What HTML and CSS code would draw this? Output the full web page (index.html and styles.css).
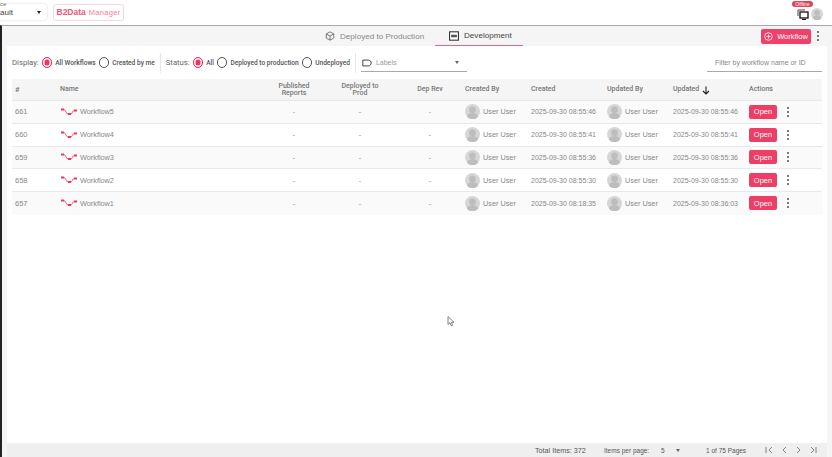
FILE: index.html
```html
<!DOCTYPE html>
<html lang="en">
  <head>
    <meta charset="UTF-8" />
    <title>B2Data Manager - Workflows</title>
    <link rel="stylesheet" href="styles.css">
  </head>
  <body>
    <svg class="defs">
      <defs>
        <symbol id="flow" viewBox="0 0 18 8">
          <path d="M1 1.500h3M8 6h3M14 2.500h3" stroke="#f0365f" stroke-width="2.200" fill="none"/>
          <path d="M4 1.500C6 2 6 6 8 6M11 6C12.500 6 12.500 2.500 14 2.500" stroke="#f0365f" stroke-width=".8" fill="none"/>
        </symbol>
        <symbol id="user" viewBox="0 0 16 16">
          <circle cx="8" cy="8" r="8" fill="#d6d6d6"/>
          <circle cx="8" cy="6.200" r="3.600" fill="#bdbdbd"/>
          <path d="M2 13.500c1-3 3.500-3.800 6-3.800s5 .8 6 3.800a8 8 0 0 1-12 0z" fill="#bdbdbd"/>
        </symbol>
        <symbol id="kebab" viewBox="0 0 4 12">
          <circle cx="2" cy="2" r=".95" fill="#444"/>
          <circle cx="2" cy="6" r=".95" fill="#444"/>
          <circle cx="2" cy="10" r=".95" fill="#444"/>
        </symbol>
      </defs>
    </svg>

    <header class="topbar">
      <div class="space-select">
        <span class="space-label">ce</span>
        <span class="space-value">ault</span>
        <span class="caret dark"></span>
      </div>
      <div class="brand"><b>B2Data</b><span>Manager</span></div>
      <div class="top-right">
        <span class="offline">Offline</span>
        <svg class="screens" viewBox="0 0 12 11">
          <path d="M1 7V1h7" fill="none" stroke="#444" stroke-width="1"/>
          <rect x="3" y="3" width="8" height="6" fill="#fff" stroke="#111" stroke-width="1.300"/>
          <path d="M5 10.500h4" stroke="#111" stroke-width="1"/>
        </svg>
        <svg class="top-avatar"><use href="#user"/></svg>
      </div>
    </header>

    <main class="main">
      <nav class="tabs">
        <a class="tab">
          <svg class="tab-icon" viewBox="0 0 12 12">
            <path d="M6 1l4.500 2.500v5L6 11 1.500 8.500v-5zM1.500 3.500L6 6l4.500-2.500M6 6v5" fill="none" stroke="#555" stroke-width=".9"/>
          </svg>
          Deployed to Production
        </a>
        <a class="tab active">
          <svg class="tab-icon" viewBox="0 0 12 12">
            <rect x=".7" y="1" width="10.600" height="10" fill="#fff" stroke="#222" stroke-width="1.200"/>
            <path d="M2.500 4.500h7v3h-7z" fill="#555"/>
          </svg>
          Development
        </a>
        <div class="tab-actions">
          <button class="add-btn">
            <svg class="plus" viewBox="0 0 10 10">
              <circle cx="5" cy="5" r="4.200" fill="none" stroke="#fff" stroke-width=".9"/>
              <path d="M5 2.800v4.400M2.800 5h4.400" stroke="#fff" stroke-width=".9"/>
            </svg>
            Workflow
          </button>
          <svg class="kebab"><use href="#kebab"/></svg>
        </div>
      </nav>

      <section class="card">
        <div class="filters">
          <span class="filter-title">Display:</span>
          <span class="radio on"></span><span class="radio-text">All Workflows</span>
          <span class="radio"></span><span class="radio-text">Created by me</span>
          <span class="divider"></span>
          <span class="filter-title">Status:</span>
          <span class="radio on"></span><span class="radio-text">All</span>
          <span class="radio"></span><span class="radio-text">Deployed to production</span>
          <span class="radio"></span><span class="radio-text">Undeployed</span>
          <span class="divider"></span>
          <div class="labels">
            <svg class="label-icon" viewBox="0 0 12 9">
              <path d="M1 1h6.500C9.500 1 11 2.500 11 4.500S9.500 8 7.500 8H1z" fill="none" stroke="#222" stroke-width="1"/>
            </svg>
            <span>Labels</span>
            <span class="caret"></span>
          </div>
          <div class="search">Filter by workflow name or ID</div>
        </div>

        <div class="table">
          <div class="row head">
            <div>#</div>
            <div class="name-head">Name</div>
            <div class="center">Published Reports</div>
            <div class="center">Deployed to Prod</div>
            <div class="center">Dep Rev</div>
            <div>Created By</div>
            <div>Created</div>
            <div>Updated By</div>
            <div class="sorted">Updated
              <svg class="arrow" viewBox="0 0 8 9">
                <path d="M4 .5v7M1 5l3 3 3-3" fill="none" stroke="#222" stroke-width="1.100"/>
              </svg>
            </div>
            <div>Actions</div>
          </div>

          <div class="row">
            <div>661</div>
            <div class="wf"><svg class="flow"><use href="#flow"/></svg>Workflow5</div>
            <div class="center">-</div><div class="center">-</div><div class="center">-</div>
            <div class="who"><svg class="avatar"><use href="#user"/></svg>User User</div>
            <div>2025-09-30 08:55:46</div>
            <div class="who"><svg class="avatar"><use href="#user"/></svg>User User</div>
            <div>2025-09-30 08:55:46</div>
            <div class="acts"><button class="open">Open</button><svg class="kebab"><use href="#kebab"/></svg></div>
          </div>
          <div class="row">
            <div>660</div>
            <div class="wf"><svg class="flow"><use href="#flow"/></svg>Workflow4</div>
            <div class="center">-</div><div class="center">-</div><div class="center">-</div>
            <div class="who"><svg class="avatar"><use href="#user"/></svg>User User</div>
            <div>2025-09-30 08:55:41</div>
            <div class="who"><svg class="avatar"><use href="#user"/></svg>User User</div>
            <div>2025-09-30 08:55:41</div>
            <div class="acts"><button class="open">Open</button><svg class="kebab"><use href="#kebab"/></svg></div>
          </div>
          <div class="row">
            <div>659</div>
            <div class="wf"><svg class="flow"><use href="#flow"/></svg>Workflow3</div>
            <div class="center">-</div><div class="center">-</div><div class="center">-</div>
            <div class="who"><svg class="avatar"><use href="#user"/></svg>User User</div>
            <div>2025-09-30 08:55:36</div>
            <div class="who"><svg class="avatar"><use href="#user"/></svg>User User</div>
            <div>2025-09-30 08:55:36</div>
            <div class="acts"><button class="open">Open</button><svg class="kebab"><use href="#kebab"/></svg></div>
          </div>
          <div class="row">
            <div>658</div>
            <div class="wf"><svg class="flow"><use href="#flow"/></svg>Workflow2</div>
            <div class="center">-</div><div class="center">-</div><div class="center">-</div>
            <div class="who"><svg class="avatar"><use href="#user"/></svg>User User</div>
            <div>2025-09-30 08:55:30</div>
            <div class="who"><svg class="avatar"><use href="#user"/></svg>User User</div>
            <div>2025-09-30 08:55:30</div>
            <div class="acts"><button class="open">Open</button><svg class="kebab"><use href="#kebab"/></svg></div>
          </div>
          <div class="row">
            <div>657</div>
            <div class="wf"><svg class="flow"><use href="#flow"/></svg>Workflow1</div>
            <div class="center">-</div><div class="center">-</div><div class="center">-</div>
            <div class="who"><svg class="avatar"><use href="#user"/></svg>User User</div>
            <div>2025-09-30 08:18:35</div>
            <div class="who"><svg class="avatar"><use href="#user"/></svg>User User</div>
            <div>2025-09-30 08:36:03</div>
            <div class="acts"><button class="open">Open</button><svg class="kebab"><use href="#kebab"/></svg></div>
          </div>
        </div>
      </section>

      <footer class="pager">
        <span class="total">Total Items: 372</span>
        <span class="per-page">Items per page:</span>
        <span class="per-value">5</span>
        <span class="caret"></span>
        <span class="pages">1 of 75 Pages</span>
        <svg class="pager-icons" viewBox="0 0 52 8">
          <path d="M1 1v6M7 1L4 4l3 3M21 1l-3 3 3 3M32 1l3 3-3 3M46 1l3 3-3 3M51 1v6" fill="none" stroke="#666" stroke-width=".8"/>
        </svg>
      </footer>
    </main>

    <svg class="cursor" viewBox="0 0 8 11">
      <path d="M1 .5v8l2-1.700 1.300 3 1.300-.6-1.300-2.900h2.700z" fill="#fff" stroke="#666" stroke-width=".8"/>
    </svg>
  </body>
</html>
```

FILE: styles.css
```css
* {
    box-sizing: border-box;
}

html,
body {
    margin: 0;
    height: 457px;
    overflow: hidden;
}

body {
    font-family: "Liberation Sans", Arial, sans-serif;
    font-size: 8px;
    color: #777;
    background: #f5f5f5;
    display: flex;
    flex-direction: column;
}

.defs {
    width: 0;
    height: 0;
    position: absolute;
}

.topbar {
    height: 26px;
    flex: none;
    background: #fff;
    border-bottom: 1px solid #a8a8a8;
    display: flex;
    align-items: center;
    padding-bottom: 1px;
}

.space-select {
    position: relative;
    width: 47px;
    height: 16px;
    display: flex;
    align-items: center;
    border-radius: 0 3px 3px 0;
    box-shadow: 0 0 2px rgba(0,0,0,0.2);
}

.space-label {
    position: absolute;
    top: -3px;
    left: 0;
    font-size: 6px;
    color: #777;
}

.space-value {
    font-size: 8px;
    color: #444;
    margin-top: 1px;
}

.caret {
    width: 0;
    height: 0;
    border-left: 2.5px solid transparent;
    border-right: 2.5px solid transparent;
    border-top: 3px solid #666;
}

.caret.dark {
    border-top-color: #222;
    position: absolute;
    right: 6px;
    top: 7px;
}

.brand {
    margin-left: 6px;
    width: 71px;
    height: 17px;
    border: 1px solid #fbd3dc;
    border-radius: 3px;
    display: flex;
    align-items: center;
    justify-content: center;
    gap: 3px;
    color: #f27d9a;
}

.brand b {
    font-size: 8.5px;
    color: #e8587c;
}

.brand span {
    font-size: 7.5px;
    letter-spacing: 0.3px;
}

.top-right {
    margin-left: auto;
    margin-right: 9px;
    width: 32px;
    height: 25px;
    position: relative;
    display: flex;
    align-items: flex-end;
    justify-content: flex-end;
    padding-bottom: 5px;
}

.offline {
    position: absolute;
    top: 1px;
    left: 1px;
    width: 21px;
    height: 6px;
    line-height: 6px;
    text-align: center;
    font-size: 5px;
    color: #fff;
    background: #e04258;
    border-radius: 3px;
}

.screens {
    width: 12px;
    height: 11px;
    margin-right: 2px;
}

.top-avatar {
    width: 12px;
    height: 12px;
}

.main {
    flex: 1;
    min-height: 0;
    margin-top: -1px;
    border-top: 1px solid #a8a8a8;
    border-left: 2px solid #222;
    display: flex;
    flex-direction: column;
}

.tabs {
    height: 20px;
    flex: none;
    display: flex;
    padding-left: 306px;
    align-items: stretch;
}

.tab {
    width: 127px;
    padding-left: 17px;
    display: flex;
    align-items: center;
    gap: 5px;
    font-size: 8.1px;
    color: #888;
}

.tab.active {
    width: 88px;
    padding-left: 14px;
    color: #444;
    border-bottom: 1px solid #ee6482;
}

.tab-icon {
    width: 10px;
    height: 10px;
    flex: none;
}

.tab-actions {
    margin-left: auto;
    display: flex;
    align-items: center;
    gap: 5px;
    padding-right: 12px;
}

.add-btn {
    width: 50px;
    height: 15px;
    border: none;
    border-radius: 2px;
    background: #f0416a;
    color: #fff;
    font: inherit;
    font-size: 7.5px;
    display: flex;
    align-items: center;
    justify-content: center;
    gap: 4px;
    padding: 0;
}

.plus {
    width: 9px;
    height: 9px;
}

.kebab {
    width: 4px;
    height: 12px;
    flex: none;
}

.card {
    flex: 1;
    min-height: 0;
    margin: 0 5px;
    padding: 0 5px;
    background: #fff;
}

.filters {
    height: 33px;
    display: flex;
    align-items: center;
    color: #555;
}

.filter-title {
    font-family: Roboto, sans-serif;
    font-size: 7.7px;
    color: #666;
    margin-right: 3px;
}

.radio {
    width: 10.5px;
    height: 10.5px;
    flex: none;
    border: 1px solid #555;
    border-radius: 50%;
    margin-right: 3px;
}

.radio.on {
    border-color: #f0365f;
    background: #f0365f;
    box-shadow: inset 0 0 0 1.5px #fff;
}

.radio-text {
    font-family: Roboto, sans-serif;
    font-size: 6.6px;
    font-weight: 500;
    color: #555;
    margin-right: 3px;
}

.divider {
    width: 1px;
    height: 20px;
    background: #e6e6e6;
    margin: 0 5px 0 2px;
}

.labels {
    width: 106px;
    height: 17px;
    margin-top: 1px;
    padding: 0 8px 0 1px;
    border-bottom: 1px solid #aaa;
    display: flex;
    align-items: center;
    gap: 4px;
    font-size: 7px;
    color: #999;
}

.label-icon {
    width: 10px;
    height: 8px;
}

.labels .caret {
    margin-left: auto;
}

.search {
    margin-left: auto;
    width: 115px;
    height: 17px;
    margin-top: 1px;
    padding-left: 8px;
    border-bottom: 1px solid #aaa;
    display: flex;
    align-items: center;
    font-size: 7px;
    color: #888;
    white-space: nowrap;
}

.row {
    display: grid;
    grid-template-columns: 48px 208px 52px 80px 60px 66px 76px 66px 76px 78px;
    height: 22.75px;
    align-items: center;
    border-bottom: 1px solid #e9e9e9;
    background: #fff;
    font-size: 7px;
    color: #888;
}

.row:nth-child(even) {
    background: #fafafa;
}

.row:last-child {
    border-bottom: none;
}

.row > div {
    padding-left: 5px;
    white-space: nowrap;
}

.row > div:first-child {
    padding-left: 3px;
    font-size: 7.500px;
}

.row > .center {
    padding-left: 0;
    text-align: center;
}

.row .wf {
    padding-left: 0;
    display: flex;
    align-items: center;
    gap: 2px;
    font-size: 7.3px;
}

.row.head {
    height: 22px;
    padding-top: 1px;
    background: #f5f5f5;
    font-family: Roboto, sans-serif;
    font-size: 7px;
    font-weight: 500;
    line-height: 7.5px;
    color: #777;
}

.row.head .center {
    padding: 0 14px;
    white-space: normal;
}

.row.head > div:nth-child(3) {
    padding: 0;
}

.row.head .name-head {
    padding-left: 0;
}

.flow {
    width: 18px;
    height: 8px;
    flex: none;
}

.who {
    display: flex;
    align-items: center;
    gap: 3px;
    font-size: 7.3px;
}

.avatar {
    width: 15px;
    height: 15px;
    flex: none;
}

.sorted {
    display: flex;
    align-items: center;
    gap: 3px;
}

.arrow {
    width: 8px;
    height: 9px;
}

.acts {
    display: flex;
    align-items: center;
    gap: 9px;
}

.open {
    width: 28px;
    height: 14px;
    padding: 0;
    border: none;
    border-radius: 2px;
    background: #ee3e65;
    color: #fff;
    font: inherit;
    font-size: 7.5px;
}

.pager {
    height: 14px;
    flex: none;
    margin: 0 5px;
    background: #efefef;
    display: flex;
    align-items: center;
    padding-left: 528px;
    color: #555;
}

.total {
    font-size: 7.2px;
    width: 69px;
}

.per-page {
    font-size: 6.5px;
    width: 57px;
}

.per-value {
    font-size: 6.5px;
    width: 15px;
}

.pages {
    font-size: 6.5px;
    margin-left: 26px;
    width: 59px;
}

.pager-icons {
    width: 52px;
    height: 8px;
}

.cursor {
    position: absolute;
    left: 447px;
    top: 316px;
    width: 8px;
    height: 11px;
}
```
